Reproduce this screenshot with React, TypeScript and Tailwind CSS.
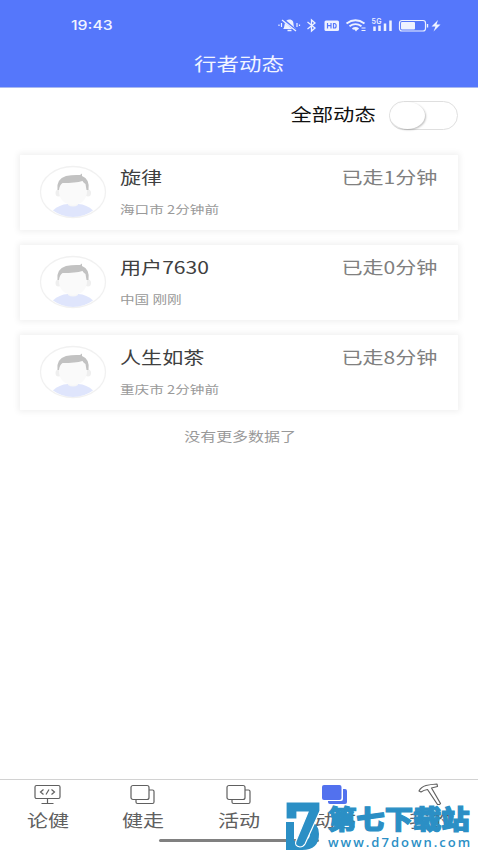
import type { ReactNode } from "react";

interface Walker {
  name: string;
  place: string;
  status: string;
}

const walkers: Walker[] = [
  { name: "旋律", place: "海口市 2分钟前", status: "已走1分钟" },
  { name: "用户7630", place: "中国 刚刚", status: "已走0分钟" },
  { name: "人生如茶", place: "重庆市 2分钟前", status: "已走8分钟" },
];

function StatusIcons() {
  return (
    <svg className="h-[18px] w-[166px]" viewBox="0 0 166 18" fill="none" stroke="#eef2ff">
      {/* muted bell */}
      <path d="M5 13c2-1 1-7 3.500-8.500 2-1.500 5-1.500 6.500 1 1 3 0 6 3 7.500Z" fill="#eef2ff" stroke="none" />
      <path d="M9.500 14.500h4" strokeWidth="1.500" />
      <path d="M4.500 3l14 12" stroke="#5577fb" strokeWidth="2.400" />
      <path d="M4 4l14 11" strokeWidth="1.300" />
      <path d="M3.500 7v4M1 8.500v1.500M19 7v4M21.500 8.500v1.500" strokeWidth="1.200" />
      {/* bluetooth */}
      <path d="M29.500 6l7.500 6-3.500 3V4l3.500 3-7.500 6" strokeWidth="1.300" />
      <rect x="46.500" y="4.500" width="14.500" height="10.500" rx="1.500" fill="#eef2ff" stroke="none" />
      <path d="M49.500 7v5.500M53 7v5.500M49.500 9.700h3.500M55.500 7.500v4.500h1c2.200 0 2.200-4.500 0-4.500Z" stroke="#5577fb" strokeWidth="1.200" />
      {/* wifi */}
      <path d="M68.500 7.500q9-6.500 18 0M71.500 10.300q6-4.300 12 0M74.500 13q3-2 6 0" strokeWidth="1.900" />
      <path d="M76 13h4l-2 2.500Z" fill="#eef2ff" stroke="none" />
      <path d="M83.500 12h4M83.500 14.500h4" strokeWidth="1.200" />
      <text x="93.500" y="8" fontSize="7" fontWeight="600" fontFamily="Inter, sans-serif" fill="#eef2ff" stroke="none" textLength="10">5G</text>
      <path d="M96.500 10.500v4.500M101.500 9.500v5.500M107 7.500v7.500M112.500 4.500v10.500" strokeWidth="2.500" />
      <rect x="121.500" y="4.500" width="26" height="10.500" rx="2.500" strokeWidth="1.200" />
      <rect x="123" y="6" width="14" height="7.500" rx="1" fill="#eef2ff" stroke="none" />
      <path d="M149.500 8v3.500" strokeWidth="1.400" />
      <path d="M160 4l-6.500 6.500h4l-2 5 7-7h-4Z" fill="#eef2ff" stroke="none" />
    </svg>
  );
}

function Avatar() {
  return (
    <svg className="h-[54px] w-[68px] shrink-0" viewBox="0 0 68 54">
      <ellipse cx="34" cy="27" rx="32.500" ry="25.500" fill="#fff" stroke="#f1f1f1" strokeWidth="1.300" />
      <path d="M14 45.500Q20 39.500 29 39h10q9 .5 15 6.500Q45 52 34 52t-20-6.500Z" fill="#dfe5fc" />
      <path d="M29 35h10v5q-5 3-10 0Z" fill="#f7f7f7" />
      <ellipse cx="19.500" cy="28" rx="3" ry="3.500" fill="#efefef" />
      <ellipse cx="49" cy="28" rx="3" ry="3.500" fill="#efefef" />
      <path d="M20 20q14-9 28 0v7q-1 12-14 13-13-1-14-13Z" fill="#fafafa" />
      <path d="M18.500 25Q17 14 27 11q7-1.500 14-1l2-1.500v2.500q8 3 6.500 14h-2l-1-6q-2-1-3-3-7 2-20 2-3 2-3.500 7Z" fill="#c2c2c2" />
    </svg>
  );
}

function WalkerCard({ name, place, status }: Walker) {
  return (
    <div className="flex h-[75px] items-start bg-white pt-[10px] pr-[21px] pl-[19px] shadow-[0_0_6px_2px_rgba(0,0,0,0.06)]">
      <Avatar />
      <div className="-mt-px ml-[13px] flex flex-col items-start">
        <p className="origin-left scale-x-[1.24] text-[17px] leading-[26px] text-[#404040]">{name}</p>
        <p className="mt-[8px] origin-left scale-x-[1.25] text-[11.7px] leading-[22px] text-[#999]">{place}</p>
      </div>
      <p className="-mt-px ml-auto origin-right scale-x-[1.24] text-[17px] leading-[26px] text-[#808080]">{status}</p>
    </div>
  );
}

function BoardIcon() {
  return (
    <svg className="h-[22px] w-[30px]" viewBox="0 0 30 22" fill="none" stroke="#606060" strokeWidth="1.200">
      <rect x="2" y="2.500" width="25" height="13" rx="1.500" />
      <path d="M14.500 15.500V20M8.500 20.500h12M10.500 6.500l-3 2.500 3 2.500M18.500 6.500l3 2.500-3 2.500M16 6.500l-3 5" />
    </svg>
  );
}

function LayersIcon({ active = false }: { active?: boolean }) {
  return active ? (
    <svg className="h-[22px] w-[30px]" viewBox="0 0 30 22" fill="#5271ee">
      <path d="M23 6h2q2 0 2 2v11q0 2-2 2H10q-2 0-2-2v-1h13q2 0 2-2Z" />
      <rect x="2" y="2" width="19.500" height="15" rx="2" />
    </svg>
  ) : (
    <svg className="h-[22px] w-[30px]" viewBox="0 0 30 22" fill="none" stroke="#606060" strokeWidth="1.200">
      <rect x="3" y="2.500" width="18" height="14" rx="2" />
      <path d="M21 7h3.500q1.500 0 1.500 1.500V19q0 1.500-1.500 1.500h-15Q8 20.500 8 19v-2.500" />
    </svg>
  );
}

function HammerIcon() {
  return (
    <svg className="h-[22px] w-[30px]" viewBox="0 0 30 22" fill="none" stroke="#606060" strokeWidth="1.200" strokeLinejoin="round">
      <path d="M4 8q2-4 7-5.500 4-1 11-1.500l.5 2.500-6 1.500 9 15.500q-1 1.500-3 1L12.500 6.500Q9 7 6 9Z" />
    </svg>
  );
}

function NavItem({ icon, label }: { icon: ReactNode; label: string }) {
  return (
    <div className="flex flex-1 flex-col items-center pt-[3px]">
      {icon}
      <span className="mt-[2px] scale-x-[1.24] text-[17px] leading-[26px] text-[#606060]">{label}</span>
    </div>
  );
}

function SiteMark() {
  return (
    <div className="absolute right-[7px] bottom-0 flex h-[50px] w-[186px]">
      <svg className="h-[50px] w-[40px] shrink-0" viewBox="0 0 40 50">
        <path d="M1 22h8v19h8q8 0 8-8 0-5-5-7l3-6q11 3 11 14 0 16-17 16H1Z" fill="#2b8fc5" />
        <path d="M1 2h34v9L20 44q-2 3-5 3-6-1-4-6l12-29H12v7H1Z" fill="#2b8fc5" stroke="#fff" strokeWidth="1.200" />
      </svg>
      <div className="flex flex-col items-start pt-[2px] pl-[3px]">
        <p className="origin-left scale-x-[1.09] text-[26px] leading-[32px] font-black whitespace-nowrap text-[#2b8fc5] [-webkit-text-stroke:1.2px_#2b8fc5]">第七下载站</p>
        <p className="mt-px font-['Open_Sans',sans-serif] text-[13px] leading-[14px] font-semibold tracking-[2px] whitespace-nowrap text-[#2b8fc5]">www.d7down.com</p>
      </div>
    </div>
  );
}

export default function App() {
  return (
    <div className="relative flex h-[850px] w-[478px] flex-col overflow-hidden bg-white font-['Noto_Sans_CJK_SC',sans-serif]">
      <header className="flex h-[88px] flex-col border-b border-[#a9b9ef] bg-[#5577fb] text-[#f1f4ff]">
        <div className="flex h-[50px] items-center justify-between pr-[34px] pl-[71px]">
          <span className="origin-left scale-x-[1.22] pt-[2px] font-['Inter',sans-serif] text-[13px] font-medium">19:43</span>
          <StatusIcons />
        </div>
        <h1 className="-mt-px self-center scale-x-[1.25] text-[18px] leading-[28px]">行者动态</h1>
      </header>

      <div className="flex h-[54px] items-center justify-end pr-[20px]">
        <span className="-mt-[2px] origin-right scale-x-[1.24] text-[17.2px] text-[#111]">全部动态</span>
        <div className="ml-[13px] h-[29px] w-[69px] rounded-full border border-[#dfdfdf]">
          <div className="h-[27px] w-[35px] rounded-[50%] bg-white shadow-[1px_1px_2px_rgba(0,0,0,0.25)]" />
        </div>
      </div>

      <main className="flex flex-1 flex-col gap-[15px] px-[20px] pt-[13px]">
        {walkers.map((walker) => (
          <WalkerCard key={walker.name} {...walker} />
        ))}
        <p className="-mt-px pl-[2px] text-center text-[12.9px] leading-[24px] text-[#999]">
          <span className="inline-block scale-x-[1.24]">没有更多数据了</span>
        </p>
      </main>

      <nav className="flex h-[71px] border-t border-[#d2d2d2] bg-white">
        <NavItem icon={<BoardIcon />} label="论健" />
        <NavItem icon={<LayersIcon />} label="健走" />
        <NavItem icon={<LayersIcon />} label="活动" />
        <NavItem icon={<LayersIcon active />} label="动态" />
        <NavItem icon={<HammerIcon />} label="我的" />
      </nav>

      <div className="absolute bottom-[8px] left-[159px] h-[3px] w-[160px] rounded-full bg-[#808080]" />
      <SiteMark />
    </div>
  );
}
